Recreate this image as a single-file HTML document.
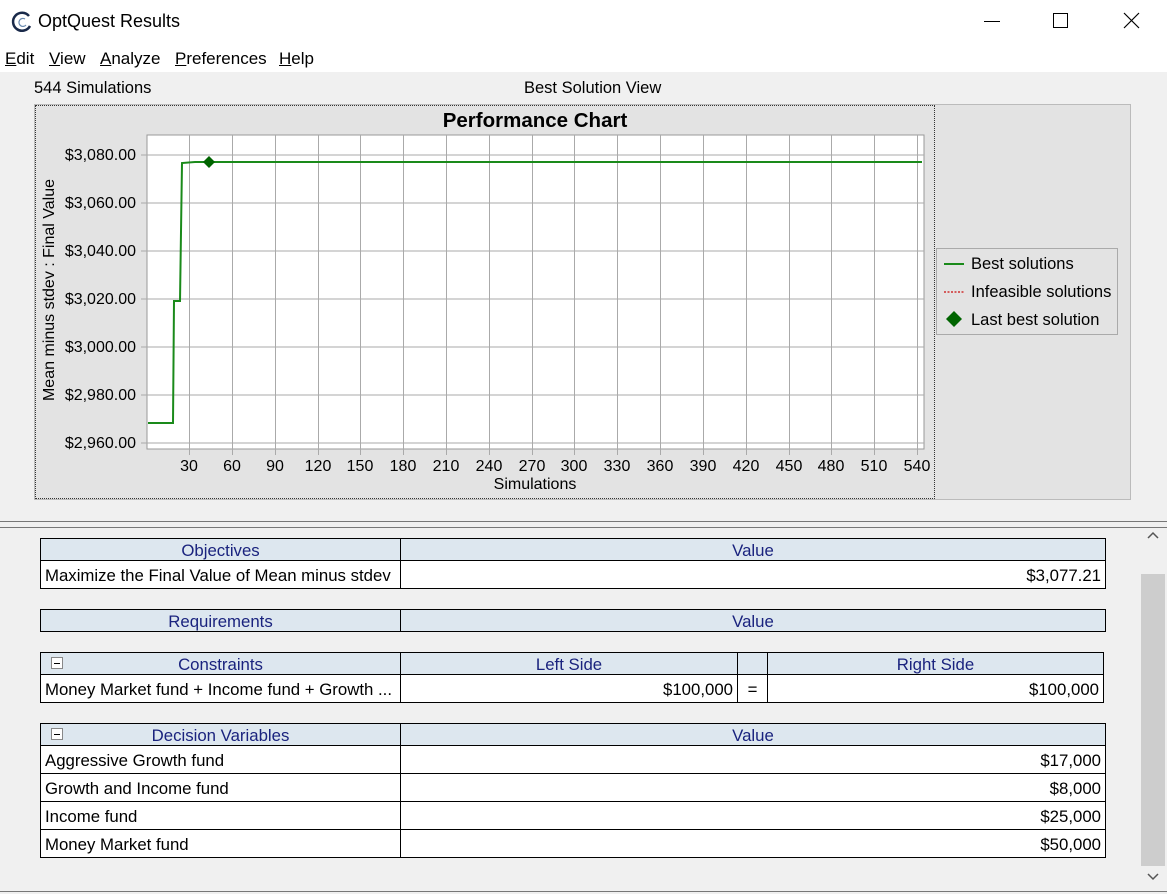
<!DOCTYPE html>
<html><head><meta charset="utf-8"><style>
*{margin:0;padding:0;box-sizing:border-box}
body{width:1167px;height:894px;background:#f0f0f0;font-family:"Liberation Sans",Arial,sans-serif;position:relative;overflow:hidden;color:#000}
.abs{position:absolute}
.title{left:0;top:0;width:1167px;height:42px;background:#fff}
.menu{left:0;top:42px;width:1167px;height:30px;background:#fff;font-size:17px}
.menu span{position:absolute;top:7px}
.menu u{text-decoration:underline}
table{position:absolute;border-collapse:collapse;font-size:16.8px;background:#fff;table-layout:fixed}
td{border:1px solid #000;padding:0 4px;height:28px;white-space:nowrap;overflow:hidden;padding-top:2px}
tr.h td{background:#dde7ef;color:#1a237e;text-align:center;height:22px;padding-top:3px;line-height:18px}
td.r{text-align:right}
.box{display:inline-block;width:12px;height:12px;border:1px solid #888;background:#fff;position:absolute;left:10px;top:4px}
.box:after{content:"";position:absolute;left:2px;top:5px;width:6px;height:1px;background:#000}
</style></head><body>
<div class="abs title">
<svg class="abs" style="left:11px;top:11px" width="22" height="22" viewBox="0 0 22 22"><path d="M18 5 A9 9 0 1 0 19 15" fill="none" stroke="#1a2a4a" stroke-width="2.5"/><path d="M14 8 A4 4 0 1 0 15 14" fill="none" stroke="#6a8ab0" stroke-width="1.2"/></svg>
<span class="abs" style="left:38px;top:11px;font-size:18px">OptQuest Results</span>
<div class="abs" style="left:984px;top:21px;width:16px;height:1px;background:#000"></div>
<div class="abs" style="left:1053px;top:13px;width:15px;height:15px;border:1px solid #000"></div>
<svg class="abs" style="left:1123px;top:12px" width="17" height="17"><path d="M1 1L16 16M16 1L1 16" stroke="#000" stroke-width="1.2"/></svg>
</div>
<div class="abs menu">
<span style="left:5px"><u>E</u>dit</span><span style="left:49px"><u>V</u>iew</span><span style="left:100px"><u>A</u>nalyze</span><span style="left:175px"><u>P</u>references</span><span style="left:279px"><u>H</u>elp</span>
</div>
<span class="abs" style="left:34px;top:79px;font-size:16.5px">544 Simulations</span>
<span class="abs" style="left:524px;top:79px;font-size:16.5px">Best Solution View</span>
<div class="abs" style="left:34px;top:104px;width:1097px;height:396px;background:#e3e3e3;border:1px solid #bbb"></div>
<div class="abs" style="left:35px;top:105px;width:900px;height:394px;border:1px dotted #333"></div>
<svg class="abs" style="left:0;top:0" width="1167" height="520">
<text x="535" y="127" font-size="20.5" font-weight="bold" text-anchor="middle" font-family="Liberation Sans">Performance Chart</text>
<rect x="147" y="135" width="777" height="314" fill="#fff" stroke="#999"/>
<g stroke="#aaa" stroke-width="1">
<line x1="141" y1="155" x2="924" y2="155"/><line x1="141" y1="203" x2="924" y2="203"/><line x1="141" y1="251" x2="924" y2="251"/><line x1="141" y1="299" x2="924" y2="299"/><line x1="141" y1="347" x2="924" y2="347"/><line x1="141" y1="395" x2="924" y2="395"/><line x1="141" y1="443" x2="924" y2="443"/>
<line x1="189.5" y1="135" x2="189.5" y2="455"/><line x1="232.5" y1="135" x2="232.5" y2="455"/><line x1="275.5" y1="135" x2="275.5" y2="455"/><line x1="318.5" y1="135" x2="318.5" y2="455"/><line x1="360.5" y1="135" x2="360.5" y2="455"/><line x1="403.5" y1="135" x2="403.5" y2="455"/><line x1="446.5" y1="135" x2="446.5" y2="455"/><line x1="489.5" y1="135" x2="489.5" y2="455"/><line x1="532.5" y1="135" x2="532.5" y2="455"/><line x1="574.5" y1="135" x2="574.5" y2="455"/><line x1="617.5" y1="135" x2="617.5" y2="455"/><line x1="660.5" y1="135" x2="660.5" y2="455"/><line x1="703.5" y1="135" x2="703.5" y2="455"/><line x1="746.5" y1="135" x2="746.5" y2="455"/><line x1="789.5" y1="135" x2="789.5" y2="455"/><line x1="831.5" y1="135" x2="831.5" y2="455"/><line x1="874.5" y1="135" x2="874.5" y2="455"/><line x1="917.5" y1="135" x2="917.5" y2="455"/>
</g>
<polyline points="148,423 173,423 174,301 180,301 182,163 195,162 922,162" fill="none" stroke="#1a8a1a" stroke-width="2"/>
<polygon points="209,156 215,162 209,168 203,162" fill="#006400"/>
<g font-size="16" font-family="Liberation Sans" fill="#000" text-anchor="end">
<text x="136" y="160">$3,080.00</text><text x="136" y="208">$3,060.00</text><text x="136" y="256">$3,040.00</text><text x="136" y="304">$3,020.00</text><text x="136" y="352">$3,000.00</text><text x="136" y="400">$2,980.00</text><text x="136" y="448">$2,960.00</text>
</g>
<g font-size="16" font-family="Liberation Sans" text-anchor="middle">
<text x="189" y="471">30</text><text x="232" y="471">60</text><text x="275" y="471">90</text><text x="318" y="471">120</text><text x="360" y="471">150</text><text x="403" y="471">180</text><text x="446" y="471">210</text><text x="489" y="471">240</text><text x="532" y="471">270</text><text x="574" y="471">300</text><text x="617" y="471">330</text><text x="660" y="471">360</text><text x="703" y="471">390</text><text x="746" y="471">420</text><text x="789" y="471">450</text><text x="831" y="471">480</text><text x="874" y="471">510</text><text x="917" y="471">540</text>
<text x="535" y="489">Simulations</text>
<text transform="translate(54,290) rotate(-90)">Mean minus stdev : Final Value</text>
</g>
<rect x="936.5" y="248.5" width="181" height="86" fill="#e3e3e3" stroke="#aaa"/>
<line x1="944" y1="264" x2="964" y2="264" stroke="#1a8a1a" stroke-width="2"/>
<line x1="944" y1="292" x2="964" y2="292" stroke="#d03030" stroke-width="1.5" stroke-dasharray="2,1.5"/>
<polygon points="954,311 962,319 954,327 946,319" fill="#006400"/>
<g font-size="16.5" font-family="Liberation Sans"><text x="971" y="269">Best solutions</text><text x="971" y="297">Infeasible solutions</text><text x="971" y="325">Last best solution</text></g>
</svg>
<div class="abs" style="left:0;top:521px;width:1167px;height:7px;border-top:1px solid #777;border-bottom:1px solid #777"></div>
<div class="abs" style="left:1141px;top:528px;width:26px;height:364px;background:#f0f0f0"></div>
<div class="abs" style="left:1141px;top:574px;width:24px;height:292px;background:#cdcdcd"></div>
<svg class="abs" style="left:1146px;top:530px" width="14" height="10"><path d="M2 8L7 3L12 8" fill="none" stroke="#555" stroke-width="1.5"/></svg>
<svg class="abs" style="left:1146px;top:872px" width="14" height="10"><path d="M2 2L7 7L12 2" fill="none" stroke="#555" stroke-width="1.5"/></svg>
<div class="abs" style="left:0;top:891px;width:1167px;height:1px;background:#777"></div>

<table style="left:40px;top:538px;width:1066px"><col style="width:360px"><col><tr class="h"><td>Objectives</td><td>Value</td></tr>
<tr><td>Maximize the Final Value of Mean minus stdev</td><td class="r">$3,077.21</td></tr></table>
<table style="left:40px;top:609px;width:1066px"><col style="width:360px"><col><tr class="h"><td>Requirements</td><td>Value</td></tr></table>
<table style="left:40px;top:652px;width:1064px"><col style="width:360px"><col style="width:337px"><col style="width:30px"><col><tr class="h"><td style="position:relative"><span class="box"></span>Constraints</td><td>Left Side</td><td></td><td>Right Side</td></tr>
<tr><td>Money Market fund + Income fund + Growth ...</td><td class="r">$100,000</td><td style="text-align:center">=</td><td class="r">$100,000</td></tr></table>
<table style="left:40px;top:723px;width:1066px"><col style="width:360px"><col><tr class="h"><td style="position:relative"><span class="box"></span>Decision Variables</td><td>Value</td></tr>
<tr><td>Aggressive Growth fund</td><td class="r">$17,000</td></tr>
<tr><td>Growth and Income fund</td><td class="r">$8,000</td></tr>
<tr><td>Income fund</td><td class="r">$25,000</td></tr>
<tr><td>Money Market fund</td><td class="r">$50,000</td></tr></table>
</body></html>
